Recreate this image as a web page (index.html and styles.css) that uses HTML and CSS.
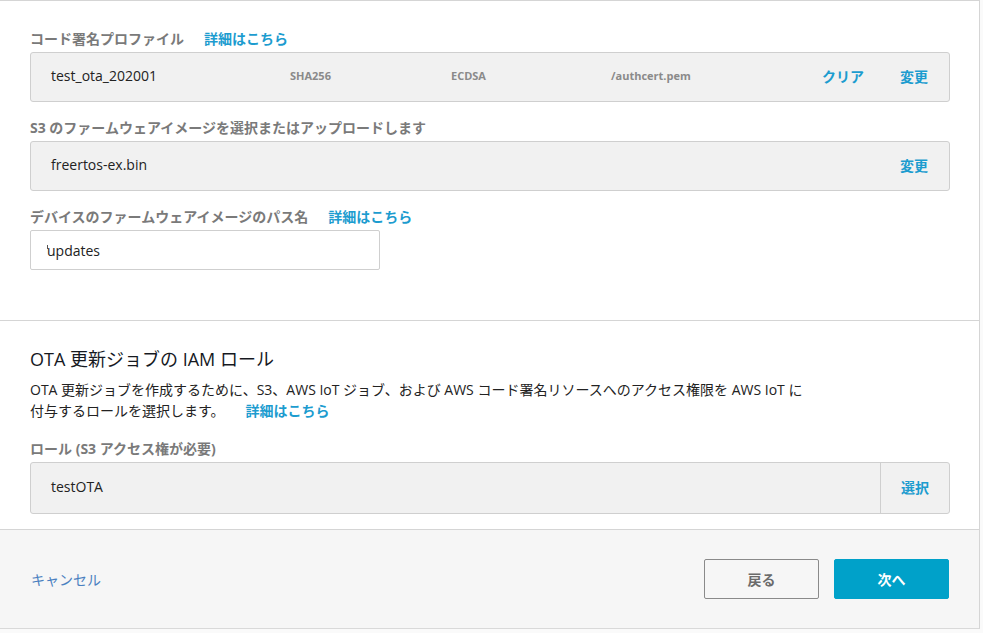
FILE: index.html
```html
<!DOCTYPE html>
<html lang="ja">
<head>
<meta charset="utf-8">
<link rel="stylesheet" href="styles.css">
</head>
<body>
<div class="page">
  <div class="card">
    <section class="section first">
      <div class="label"><span>コード署名プロファイル</span><a class="info">詳細はこちら</a></div>
      <div class="box profile">
        <span class="val name">test_ota_202001</span>
        <span class="meta c2">SHA256</span>
        <span class="meta c3">ECDSA</span>
        <span class="meta c4">/authcert.pem</span>
        <a class="act">クリア</a>
        <a class="act">変更</a>
      </div>

      <div class="label"><span>S3 のファームウェアイメージを選択またはアップロードします</span></div>
      <div class="box">
        <span class="val grow">freertos-ex.bin</span>
        <a class="act">変更</a>
      </div>

      <div class="label"><span>デバイスのファームウェアイメージのパス名</span><a class="info">詳細はこちら</a></div>
      <div class="input"><span class="caret"></span>updates</div>
    </section>

    <section class="section second">
      <h2 class="title">OTA 更新ジョブの IAM ロール</h2>
      <p class="desc">OTA 更新ジョブを作成するために、S3、AWS IoT ジョブ、および AWS コード署名リソースへのアクセス権限を AWS IoT に<br>付与するロールを選択します。<a class="info">詳細はこちら</a></p>
      <div class="label"><span>ロール (S3 アクセス権が必要)</span></div>
      <div class="box role">
        <span class="val grow">testOTA</span>
        <a class="select">選択</a>
      </div>
    </section>

    <footer class="footer">
      <a class="cancel">キャンセル</a>
      <div class="buttons">
        <button class="btn back">戻る</button>
        <button class="btn next">次へ</button>
      </div>
    </footer>
  </div>
</div>
</body>
</html>
```

FILE: styles.css
```css
* { box-sizing: border-box; }
html, body { margin: 0; padding: 0; }
body {
  background: #ececec;
  font-family: "Open Sans", "Noto Sans CJK JP", sans-serif;
  font-size: 14px;
  color: #222;
}
.page {
  width: 983px;
  height: 633px;
  background: #fafafa;
  overflow: hidden;
}
.card {
  width: 980px;
  background: #fff;
  border-top: 1px solid #d5d5d5;
  border-right: 1px solid #d5d5d5;
  border-bottom: 1px solid #d9d9d9;
}
.section { padding: 0 30px 0 30px; }
.section.first {
  padding-top: 28px;
  padding-bottom: 50px;
  border-bottom: 1px solid #d5d5d5;
}
.section.second {
  padding-top: 25px;
  padding-bottom: 15px;
  border-bottom: 1px solid #d5d5d5;
}
.label {
  display: flex;
  align-items: center;
  height: 20px;
  line-height: 20px;
  margin-bottom: 3px;
  color: #7a7a7a;
  font-weight: 700;
  font-size: 14px;
}
.info {
  color: #1c9ccf;
  font-weight: 700;
  margin-left: 20px;
}
.box {
  display: flex;
  align-items: center;
  width: 920px;
  height: 50px;
  background: #f1f1f1;
  border: 1px solid #cfcfcf;
  border-radius: 3px;
  padding: 0 21px 3px 20px;
  margin-bottom: 16px;
}
.val { color: #222; font-size: 14px; }
.grow { flex: 1; }
.name { width: 239px; }
.meta {
  color: #8a8a8a;
  font-size: 11px;
  font-weight: 700;
}
.c2 { width: 161px; }
.c3 { width: 160px; }
.c4 { flex: 1; }
.act {
  color: #1c9ccf;
  font-weight: 700;
  font-size: 14px;
}
.act + .act { margin-left: 36px; }
.input {
  width: 350px;
  height: 40px;
  border: 1px solid #cfcfcf;
  background: #fff;
  border-radius: 2px;
  display: flex;
  align-items: center;
  padding-left: 16px;
  padding-top: 1px;
  color: #222;
  position: relative;
}
.caret {
  position: absolute;
  left: 16px;
  top: 14px;
  width: 1px;
  height: 4px;
  background: #555;
}
.title {
  margin: 0;
  font-size: 18px;
  font-weight: 400;
  line-height: 26px;
  color: #16191f;
}
.desc {
  margin: 7px 0 18px 0;
  line-height: 21px;
  font-size: 14px;
  color: #222;
}
.desc .info { margin-left: 21px; }
.box.role {
  height: 52px;
  padding-right: 0;
  padding-bottom: 0;
  margin-bottom: 0;
}
.box.role .val { padding-bottom: 3px; }
.select {
  align-self: stretch;
  width: 69px;
  border-left: 1px solid #cfcfcf;
  display: flex;
  align-items: center;
  justify-content: center;
  padding-bottom: 3px;
  color: #1c9ccf;
  font-weight: 700;
}
.footer {
  background: #f6f6f6;
  height: 98px;
  display: flex;
  align-items: center;
  justify-content: space-between;
  padding: 0 30px 0 31px;
}
.cancel {
  color: #4a80c0;
  font-size: 14px;
}
.buttons { display: flex; gap: 15px; }
.btn {
  width: 115px;
  height: 40px;
  border-radius: 2px;
  font-family: "Open Sans", "Noto Sans CJK JP", sans-serif;
  font-size: 14px;
  font-weight: 700;
  cursor: pointer;
}
.back {
  background: #f6f6f6;
  border: 1px solid #8a8a8a;
  color: #6b6b6b;
}
.next {
  background: #00a1c9;
  border: 1px solid #00a1c9;
  color: #fff;
}
```
